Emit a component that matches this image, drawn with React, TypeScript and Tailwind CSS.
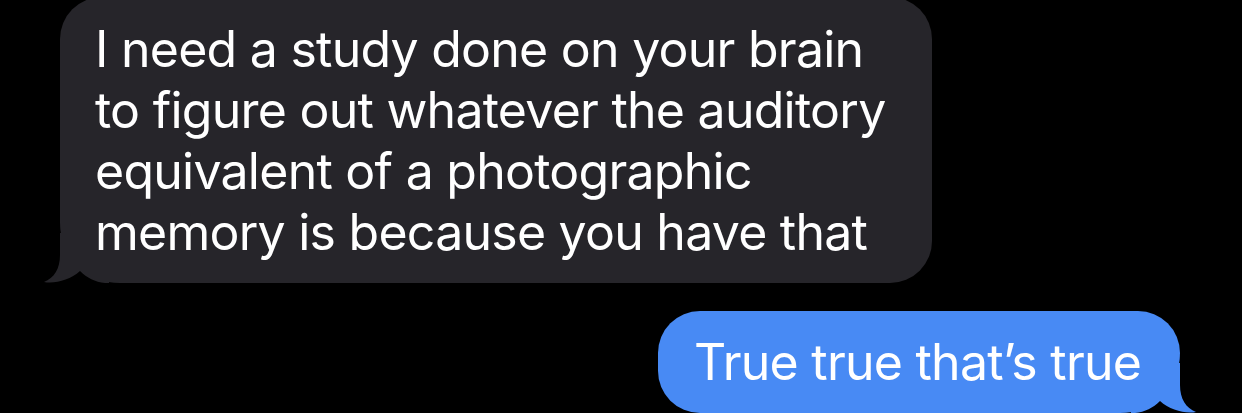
import React from 'react';

const Tail: React.FC<{ color: string; side: 'left' | 'right' }> = ({ color, side }) => (
  <svg
    width="66"
    height="50"
    viewBox="0 0 66 50"
    className={`absolute bottom-0 ${side === 'left' ? 'left-[-17px]' : 'right-[-17px] -scale-x-100'}`}
  >
    <path
      d="M17 0 L17 22 C17 36 11 45 1 49 C12 51 27 47 37 38 C44 45 52 49 62 50 L66 50 L66 0 Z"
      fill={color}
    />
  </svg>
);

const lines = [
  'I need a study done on your brain',
  'to figure out whatever the auditory',
  'equivalent of a photographic',
  'memory is because you have that',
];

export default function App() {
  return (
    <div className="w-full h-[413px] bg-black overflow-hidden flex flex-col font-['Inter',sans-serif] text-white text-[50px] leading-[61px] tracking-[-0.75px]">
      <div className="relative ml-[60px] mt-[-3px] w-[872px] h-[288px] bg-[#26252a] rounded-[42px] rounded-bl-[60px] pl-[35px] pt-[22px]">
        <Tail color="#26252a" side="left" />
        <div className="relative">
          {lines.map((l) => (
            <div key={l} className="whitespace-nowrap">{l}</div>
          ))}
        </div>
      </div>
      <div className="relative self-end mr-[62px] mt-[28px] w-[522px] h-[102px] bg-[#488af4] rounded-[42px] rounded-br-[60px] pl-[36px] pt-[21px]">
        <Tail color="#488af4" side="right" />
        <div className="relative whitespace-nowrap">True true that’s true</div>
      </div>
    </div>
  );
}
